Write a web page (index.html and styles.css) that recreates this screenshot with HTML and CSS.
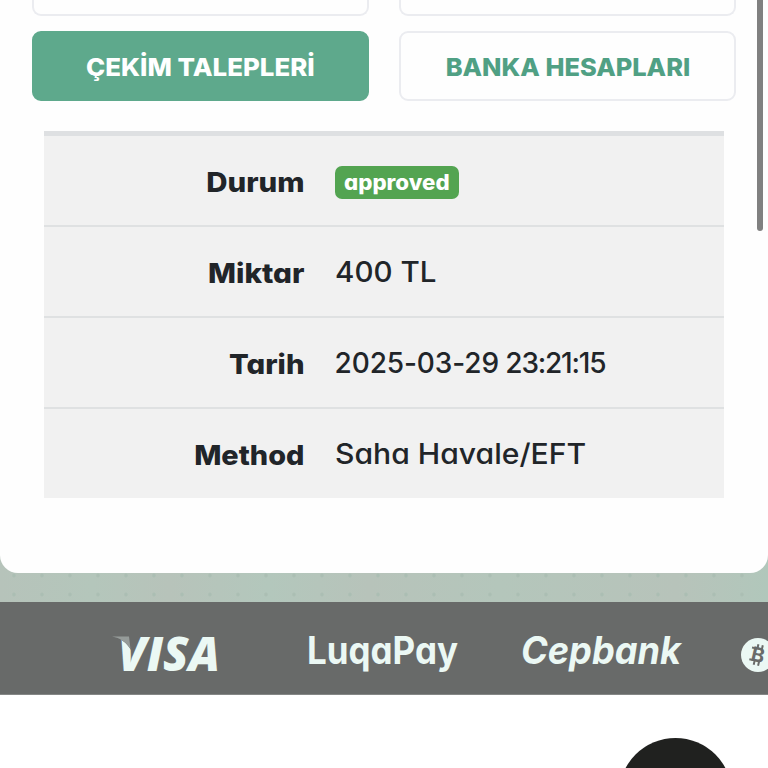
FILE: index.html
```
<!DOCTYPE html>
<html lang="tr">
<head>
<meta charset="utf-8">
<title>Çekim Talepleri</title>
<link rel="stylesheet" href="styles.css">
</head>
<body>
<main class="backdrop">
  <section class="card">
    <nav class="tabs">
      <a class="tab tab-cut"></a>
      <a class="tab tab-cut"></a>
      <a class="tab tab-active"><span class="t-cekim">ÇEKİM TALEPLERİ</span></a>
      <a class="tab"><span class="t-banka">BANKA HESAPLARI</span></a>
    </nav>
    <dl class="details">
      <div class="row"><dt class="l-durum">Durum</dt><dd><span class="badge"><span class="badge-text">approved</span></span></dd></div>
      <div class="row"><dt class="l-miktar">Miktar</dt><dd class="v-amount">400 TL</dd></div>
      <div class="row"><dt class="l-tarih">Tarih</dt><dd class="v-date">2025-03-29 <span class="time">23:21:15</span></dd></div>
      <div class="row"><dt class="l-method">Method</dt><dd class="v-method">Saha Havale/EFT</dd></div>
    </dl>
  </section>
</main>
<footer class="payments">
  <svg class="logos" viewBox="0 0 768 93" width="768" height="93">
    <text class="visa" x="118" y="68.500" textLength="102" lengthAdjust="spacingAndGlyphs">VISA</text>
    <path class="under" d="M111 33H131V48C127 41 121 36 111 34Z"/>
    <path class="fold" d="M112 34.500H129L130.500 47C126 40 120 36 112 34.500Z"/>
    <text class="word" x="307" y="62" textLength="151" lengthAdjust="spacingAndGlyphs">LuqaPay</text>
    <text class="word slanted" x="521" y="62" textLength="160" lengthAdjust="spacingAndGlyphs">Cepbank</text>
    <circle class="coin" cx="758" cy="53" r="17"/>
    <g transform="rotate(13 758 53)">
      <text class="coin-letter" x="751.500" y="60">B</text>
      <path class="coin-ticks" d="M756 42.500v4M760.500 42.500v4M756 59.500v4M760.500 59.500v4M750.500 47h4M750.500 59h4"/>
    </g>
  </svg>
</footer>
<div class="scrollbar"></div>
<div class="chat"></div>
</body>
</html>
```
FILE: styles.css
```
* { box-sizing: border-box; }
html { height: 768px; overflow: hidden; }
body {
  margin: 0;
  height: 768px;
  overflow: hidden;
  position: relative;
  background: #fff;
  color: #212529;
  font-family: Inter, "Liberation Sans", sans-serif;
  font-feature-settings: "cv11" 1;
}
.backdrop {
  height: 602px;
  background:
    radial-gradient(circle, #abbeb3 0 1px, transparent 2.5px) 0 566px / 28px 19px,
    linear-gradient(90deg, #b6c3ba, #b4c6bb 12%, #b7c3ba 22%, #b3c7bc 35%, #b7c3ba 48%, #b4c6bb 65%, #b7c3ba 88%, #b1c7bb);
}
.card {
  height: 572.500px;
  padding: 0 32px;
  background: #fefefe;
  border-radius: 0 0 18px 18px;
}
.tabs {
  display: grid;
  grid-template-columns: 337px 337px;
  grid-template-rows: 16px 70px;
  gap: 15px 30px;
}
.tab {
  display: flex;
  align-items: center;
  justify-content: center;
  padding-top: 1px;
  border: 2px solid #ebecf0;
  border-radius: 9px;
  color: #50a084;
  font-size: 24.500px;
  font-weight: 800;
  white-space: nowrap;
}
.tab-cut { border-top: 0; border-radius: 0 0 9px 9px; }
.tab-active { background: #5ea98c; border-color: #5ea98c; color: #fff; }
.t-cekim { transform: scaleX(1.055); }
.t-banka { transform: scaleX(1.037); }
.details {
  margin: 30px 12px 0;
  width: 679.500px;
  background: #f1f1f1;
  border-top: 5px solid #dee0e2;
}
.row {
  display: grid;
  grid-template-columns: 260.500px 1fr;
  column-gap: 30px;
  align-items: center;
  height: 91px;
  font-size: 28px;
  font-weight: 450;
  line-height: 34px;
  white-space: nowrap;
  border-bottom: 2px solid #dfe1e2;
}
.row:last-child { height: 89px; border-bottom: 0; }
dt {
  padding-top: 2px;
  text-align: right;
  font-weight: 800;
  font-size: 27.500px;
  transform-origin: right;
}
dd { margin: 0; transform-origin: left; }
.l-durum { transform: scaleX(1.070); }
.l-miktar { transform: scaleX(1.080); }
.l-tarih { transform: scaleX(1.065); }
.l-method { transform: scaleX(1.050); }
.v-amount { transform: scaleX(1.055); }
.v-date { letter-spacing: -0.100px; word-spacing: -1px; }
.time { letter-spacing: -1.200px; }
.v-method { transform: scaleX(1.075); }
.badge {
  display: block;
  width: 124px;
  height: 33px;
  margin-top: 3px;
  border-radius: 7px;
  background: #53a451;
  color: #fff;
  font-size: 21px;
  font-weight: 800;
  line-height: 33px;
  text-align: center;
}
.badge-text { display: inline-block; transform: scaleX(1.060); }
.payments { height: 93px; background: #686a69; border-bottom: 1px solid #858786; }
.logos { display: block; }
.logos text, .coin { fill: #ebf8f4; }
.logos .visa { font: italic 800 48px "Open Sans", sans-serif; }
.under { fill: #686a69; }
.fold { fill: #959b99; }
.word { font-size: 38px; font-weight: 650; }
.slanted { font-style: italic; }
.logos .coin-letter { fill: #686a69; font-size: 20px; font-weight: 700; }
.coin-ticks { stroke: #686a69; stroke-width: 2; }
.scrollbar {
  position: absolute;
  top: -20px;
  left: 757px;
  width: 6px;
  height: 251px;
  border-radius: 3px;
  background: #808080;
}
.chat {
  position: absolute;
  left: 619px;
  top: 738px;
  width: 113px;
  height: 30px;
  overflow: hidden;
}
.chat::before {
  content: "";
  display: block;
  height: 113px;
  border-radius: 50%;
  background: #20211f;
}
```
